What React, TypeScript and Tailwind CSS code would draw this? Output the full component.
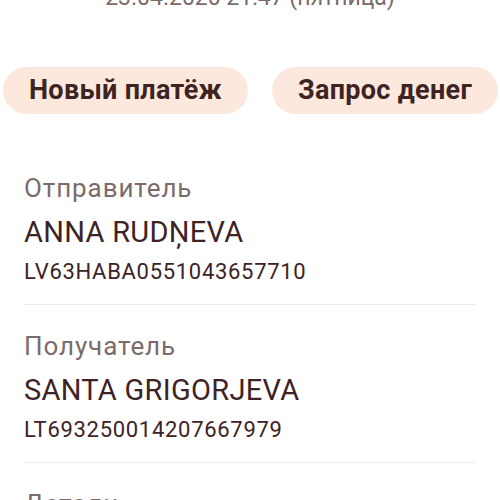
const PARTIES = [
  { label: "Отправитель", name: "ANNA RUDŅEVA", iban: "LV63HABA0551043657710" },
  { label: "Получатель", name: "SANTA GRIGORJEVA", iban: "LT693250014207667979" },
];

function PillButton({ children }: { children: string }) {
  return (
    <button className="h-[47px] rounded-full bg-[#fde8dd] px-[26px] text-[27px] font-bold tracking-[0.3px] text-[#3d2422]">
      {children}
    </button>
  );
}

export default function App() {
  return (
    <div className="h-[500px] w-[500px] overflow-hidden bg-white font-['Roboto',sans-serif]">
      {/* date line, mostly scrolled off the top */}
      <div className="-mt-[17px] h-[30px] text-center text-[23px] leading-[30px] text-[#7a6a69]">
        23.04.2020 21:47 (пятница)
      </div>

      <div className="mt-[54px] flex gap-6 pl-[3px]">
        <PillButton>Новый платёж</PillButton>
        <PillButton>Запрос денег</PillButton>
      </div>

      <div className="mt-[33px]">
        {PARTIES.map((p) => (
          <div key={p.label} className="mx-6 border-b border-[#ececec] pt-[27px] pb-[19px]">
            <div className="text-[26px] leading-[28px] tracking-[0.9px] text-[#7b6b6a]">{p.label}</div>
            <div className="mt-[14px] text-[29px] leading-[32px] tracking-[0.3px] text-[#3d2325]">{p.name}</div>
            <div className="mt-[11px] text-[22px] leading-[26px] tracking-[0.7px] text-[#3d2325]">{p.iban}</div>
          </div>
        ))}
        <div className="mx-6 pt-[27px] text-[26px] leading-[28px] tracking-[0.9px] text-[#7b6b6a]">Детали</div>
      </div>
    </div>
  );
}
